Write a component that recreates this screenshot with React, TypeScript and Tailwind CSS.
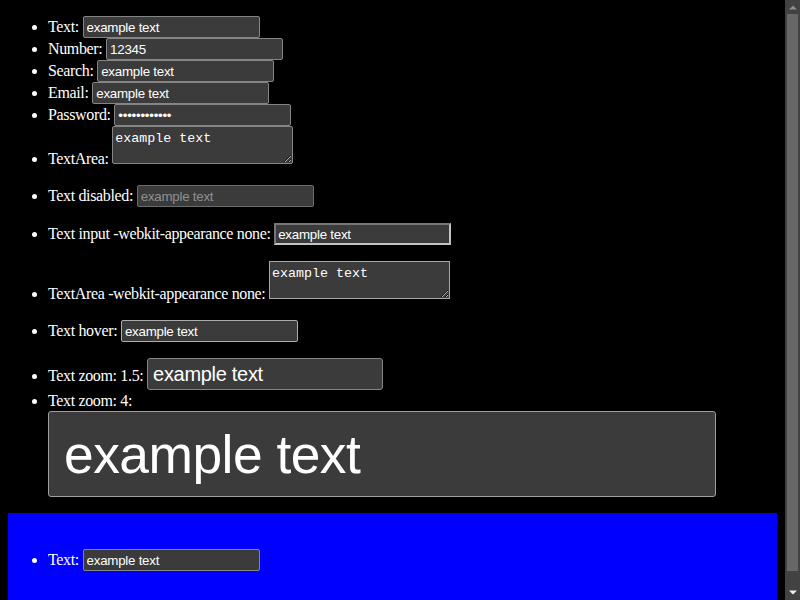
import React from 'react';

const field =
  'inline-block h-[22px] w-[177px] rounded-[2px] border border-[#858585] bg-[#3b3b3b] px-[3px] align-baseline font-["Liberation_Sans",Arial,sans-serif] text-[13.333px] tracking-[-0.25px] text-white outline-none';

const area =
  'inline-block h-[38px] w-[181px] resize rounded-[2px] border border-[#858585] bg-[#3b3b3b] p-[2px] align-baseline font-["Liberation_Mono","Courier_New",monospace] text-[13.333px] tracking-normal text-white outline-none';

const list = 'my-4 list-disc pl-10 leading-[20px]';

function Scrollbar() {
  return (
    <div className="flex h-screen w-[15px] shrink-0 flex-col items-center bg-[#424242]">
      <div className="flex h-[14px] w-full items-center justify-center">
        <svg width="8" height="5" viewBox="0 0 8 5">
          <path d="M0 4.5 L4 0.5 L8 4.5 Z" fill="#8c8c8c" />
        </svg>
      </div>
      <div className="h-[557px] w-[11px] bg-[#686868]" />
      <div className="flex-1" />
      <div className="flex h-[15px] w-full items-center justify-center">
        <svg width="8" height="5" viewBox="0 0 8 5">
          <path d="M0 0.5 L8 0.5 L4 4.5 Z" fill="#f0f0f0" />
        </svg>
      </div>
    </div>
  );
}

export default function App() {
  return (
    <div className="flex h-screen overflow-hidden bg-black">
      <div className="h-screen min-w-0 flex-1 overflow-hidden px-2 pb-2 font-['Liberation_Serif','Times_New_Roman',serif] text-[16px] tracking-[-0.35px] text-white scheme-dark">
        <div className="flow-root">
          <ul className={list}>
            <li>
              Text: <input type="text" className={field} defaultValue="example text" />
            </li>
            <li>
              Number: <input type="number" className={field} defaultValue="12345" />
            </li>
            <li>
              Search: <input type="search" className={field} defaultValue="example text" />
            </li>
            <li>
              Email: <input type="email" className={field} defaultValue="example text" />
            </li>
            <li>
              Password: <input type="password" className={field} defaultValue="example text" />
            </li>
            <li>
              TextArea: <textarea className={area} defaultValue="example text" />
            </li>
          </ul>

          <ul className={list}>
            <li>
              Text disabled:{' '}
              <input
                type="text"
                disabled
                className="inline-block h-[22px] w-[177px] rounded-[2px] border border-[#6c6c6c] bg-[#3b3b3b] px-[3px] align-baseline font-['Liberation_Sans',Arial,sans-serif] text-[13.333px] tracking-[-0.25px] text-[#8f8f8f]"
                defaultValue="example text"
              />
            </li>
          </ul>

          <ul className={list}>
            <li>
              Text input -webkit-appearance none:{' '}
              <input
                type="text"
                className="inline-block h-[22px] w-[177px] appearance-none border-2 border-t-[#767676] border-r-[#c3c3c3] border-b-[#c3c3c3] border-l-[#767676] bg-[#3b3b3b] px-[2px] align-baseline font-['Liberation_Sans',Arial,sans-serif] text-[13.333px] tracking-[-0.25px] text-white outline-none"
                defaultValue="example text"
              />
            </li>
          </ul>

          <ul className={list}>
            <li>
              TextArea -webkit-appearance none:{' '}
              <textarea
                className="inline-block h-[38px] w-[181px] resize appearance-none border border-[#a9a9a9] bg-[#3b3b3b] p-[2px] align-baseline font-['Liberation_Mono','Courier_New',monospace] text-[13.333px] tracking-normal text-white outline-none"
                defaultValue="example text"
              />
            </li>
          </ul>

          <ul className={list}>
            <li>
              Text hover:{' '}
              <input
                type="text"
                className="inline-block h-[22px] w-[177px] rounded-[2px] border border-[#acacac] bg-[#3b3b3b] px-[3px] align-baseline font-['Liberation_Sans',Arial,sans-serif] text-[13.333px] tracking-[-0.25px] text-white outline-none"
                defaultValue="example text"
              />
            </li>
          </ul>

          <ul className={list}>
            <li>
              Text zoom: 1.5:{' '}
              <input
                type="text"
                className="inline-block h-[32px] w-[236px] rounded-[3px] border border-[#858585] bg-[#3b3b3b] px-[5px] align-baseline font-['Liberation_Sans',Arial,sans-serif] text-[20px] tracking-[-0.3px] text-white outline-none"
                defaultValue="example text"
              />
            </li>
            <li className="pt-px">
              Text zoom: 4:{' '}
              <input
                type="text"
                className="inline-block h-[86px] w-[668px] rounded-[3px] border border-[#a0a0a0] bg-[#3b3b3b] px-[15px] align-baseline font-['Liberation_Sans',Arial,sans-serif] text-[53.333px] tracking-[-0.5px] text-white outline-none"
                defaultValue="example text"
              />
            </li>
          </ul>

          <div className="bg-[#0000ff] py-5">
            <ul className={list}>
              <li>
                Text: <input type="text" className={field} defaultValue="example text" />
              </li>
            </ul>
          </div>
        </div>
      </div>
      <Scrollbar />
    </div>
  );
}
